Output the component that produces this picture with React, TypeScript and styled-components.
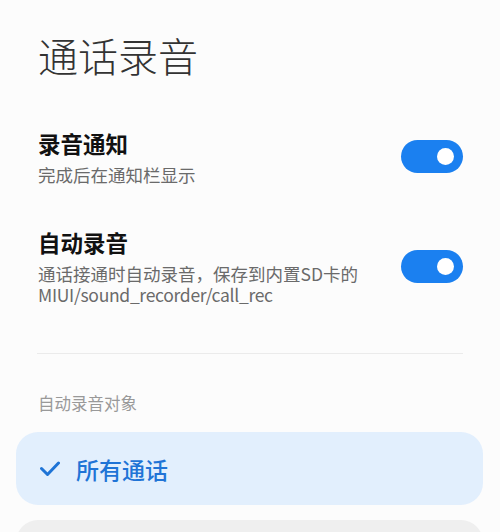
import React from "react";
import styled, { createGlobalStyle } from "styled-components";

const Global = createGlobalStyle`
  html, body { margin: 0; padding: 0; background: #fcfcfc; }
  body { font-family: "Noto Sans CJK SC", "Noto Sans", sans-serif; -webkit-font-smoothing: antialiased; }
`;

const Page = styled.div`
  padding-top: 31px;
  overflow: hidden;
  height: 532px;
  box-sizing: border-box;
`;

const Title = styled.h1`
  margin: 0 0 28px 0;
  padding: 0 38px;
  font-size: 40px;
  line-height: 48px;
  font-weight: 300;
  color: #333;
`;

const List = styled.div`
  display: flex;
  flex-direction: column;
`;

const Row = styled.div`
  display: flex;
  align-items: center;
  justify-content: space-between;
  padding: 21px 37px 21px 38px;
`;

const Texts = styled.div`
  display: flex;
  flex-direction: column;
`;

const RowTitle = styled.div`
  font-size: 22.5px;
  line-height: 30px;
  font-weight: 700;
  color: #111;
  margin-bottom: 6px;
`;

const RowSub = styled.div<{ $latin?: boolean }>`
  font-size: 17.5px;
  line-height: 21px;
  color: #6a6a6a;
  letter-spacing: ${(p) => (p.$latin ? "-0.3px" : "0")};
`;

const Toggle = styled.div<{ $on: boolean }>`
  flex: none;
  width: 62px;
  height: 33px;
  border-radius: 17px;
  background: ${(p) => (p.$on ? "#1b80f0" : "#d9d9d9")};
  display: flex;
  align-items: center;
  justify-content: ${(p) => (p.$on ? "flex-end" : "flex-start")};
  padding: 0 9px;
  box-sizing: border-box;
`;

const Knob = styled.div`
  width: 17px;
  height: 17px;
  border-radius: 50%;
  background: #fff;
`;

const Divider = styled.div`
  margin: 27px 37px 0 37px;
  height: 1px;
  background: #ebebeb;
`;

const SectionLabel = styled.div`
  margin: 38px 38px 0 38px;
  font-size: 16.5px;
  line-height: 22px;
  color: #999;
`;

const Options = styled.div`
  margin: 18px 17px 0 16px;
  display: flex;
  flex-direction: column;
  gap: 15px;
`;

const Option = styled.div<{ $selected: boolean }>`
  flex: none;
  height: 73px;
  border-radius: 22px;
  background: ${(p) => (p.$selected ? "#e2effd" : "#efefef")};
  display: flex;
  align-items: center;
  padding-left: 24px;
  gap: 16px;
`;

const OptionText = styled.span<{ $selected: boolean }>`
  font-size: 23px;
  font-weight: 500;
  color: ${(p) => (p.$selected ? "#1f74d6" : "#222")};
`;

const Check = () => (
  <svg width="20" height="20" viewBox="0 0 20 20" fill="none">
    <path d="M1.5 9.5 L7.5 15.5 L18.5 4" stroke="#1f74d6" strokeWidth="3" strokeLinecap="round" strokeLinejoin="round" />
  </svg>
);

export default function App() {
  return (
    <Page>
      <Global />
      <Title>通话录音</Title>
      <List>
        <Row>
          <Texts>
            <RowTitle>录音通知</RowTitle>
            <RowSub>完成后在通知栏显示</RowSub>
          </Texts>
          <Toggle $on>
            <Knob />
          </Toggle>
        </Row>
        <Row>
          <Texts>
            <RowTitle>自动录音</RowTitle>
            <RowSub>通话接通时自动录音，保存到内置SD卡的</RowSub>
            <RowSub $latin>MIUI/sound_recorder/call_rec</RowSub>
          </Texts>
          <Toggle $on>
            <Knob />
          </Toggle>
        </Row>
      </List>
      <Divider />
      <SectionLabel>自动录音对象</SectionLabel>
      <Options>
        <Option $selected>
          <Check />
          <OptionText $selected>所有通话</OptionText>
        </Option>
        <Option $selected={false} />
      </Options>
    </Page>
  );
}
